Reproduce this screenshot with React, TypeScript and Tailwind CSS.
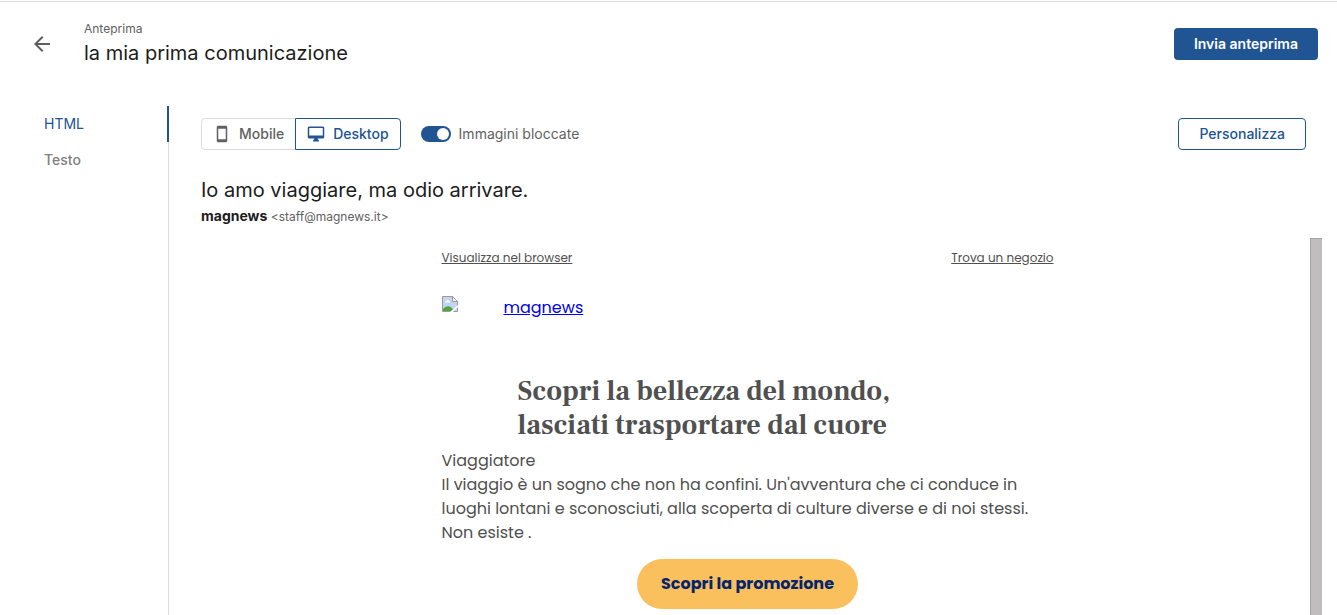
import React, { useState } from "react"
import clsx from "clsx"
import { MdArrowBack, MdOutlineDesktopMac, MdStayCurrentPortrait } from "react-icons/md"

type View = "html" | "text"
type Device = "mobile" | "desktop"

const views: { id: View; label: string }[] = [
  { id: "html", label: "HTML" },
  { id: "text", label: "Testo" },
]

const devices = [
  { id: "mobile" as Device, label: "Mobile", icon: MdStayCurrentPortrait },
  { id: "desktop" as Device, label: "Desktop", icon: MdOutlineDesktopMac },
]

function Header() {
  return (
    <header className="flex items-start border-t border-[#dcdcdc] pr-[19px] pl-[30px] pt-[17px]">
      <button type="button" aria-label="Indietro" className="mt-[13px] text-[#5f5f5f]">
        <MdArrowBack className="h-6 w-6" />
      </button>
      <div className="ml-[30px] flex-1">
        <p className="text-xs leading-5 text-[#616161]">Anteprima</p>
        <h1 className="text-xl leading-7 text-[#1c1c1c]">la mia prima comunicazione</h1>
      </div>
      <button type="button" className="mt-[9px] h-8 rounded bg-[#205493] px-5 text-sm font-semibold text-white">
        Invia anteprima
      </button>
    </header>
  )
}

function SideNav({ view, onChange }: { view: View; onChange: (v: View) => void }) {
  return (
    <nav className="w-[169px] shrink-0 border-r border-[#dcdcdc]">
      {views.map((v) => (
        <button
          key={v.id}
          type="button"
          onClick={() => onChange(v.id)}
          className={clsx(
            "-mr-px flex h-9 w-[169px] items-center border-r-2 pl-11 text-sm",
            view === v.id ? "border-[#205493] text-[#205493]" : "border-transparent font-medium text-[#808080]"
          )}
        >
          {v.label}
        </button>
      ))}
    </nav>
  )
}

interface ToolbarProps {
  device: Device
  onDevice: (d: Device) => void
  blocked: boolean
  onBlocked: (b: boolean) => void
}

function Toolbar({ device, onDevice, blocked, onBlocked }: ToolbarProps) {
  return (
    <div className="flex items-center px-4 pt-3">
      <div className="flex">
        {devices.map(({ id, label, icon: Icon }) => (
          <button
            key={id}
            type="button"
            onClick={() => onDevice(id)}
            className={clsx(
              "flex h-8 items-center gap-2 border px-[11px] text-sm font-medium first:rounded-l last:-ml-px last:rounded-r",
              device === id ? "z-10 border-[#205493] text-[#205493]" : "border-[#dcdcdc] text-[#616161]"
            )}
          >
            <Icon className="h-[18px] w-[18px]" />
            {label}
          </button>
        ))}
      </div>
      <label className="ml-5 flex items-center gap-2 text-sm text-[#616161]">
        <input
          type="checkbox"
          role="switch"
          checked={blocked}
          onChange={(e) => onBlocked(e.target.checked)}
          className="flex h-4 w-[30px] appearance-none items-center rounded-full bg-[#9e9e9e] px-0.5 before:h-3 before:w-3 before:rounded-full before:bg-white checked:justify-end checked:bg-[#205493]"
        />
        Immagini bloccate
      </label>
      <button type="button" className="ml-auto h-8 rounded border border-[#205493] px-5 text-sm font-medium text-[#205493]">
        Personalizza
      </button>
    </div>
  )
}

function BrokenImage() {
  return (
    <svg viewBox="0 0 16 16" className="h-4 w-4 shrink-0" aria-hidden="true">
      <path d="M.5.5h10l5 5v10H.5z" fill="#c3d5f5" stroke="#9a9a9a" />
      <path d="M3 6.5c0-1 .8-1.7 1.7-1.5C5 4 6.5 3.7 7 4.8c1.2 0 1.4 1.7.3 1.7z" fill="#fff" />
      <path d="M1 15v-2c2-3 6-4 9-1l2 3z" fill="#4ea640" />
      <path d="M10.5.5v5h5z" fill="#fff" stroke="#9a9a9a" />
      <path d="M8 16l8-7v2l-5 5z" fill="#fff" />
    </svg>
  )
}

function Newsletter() {
  return (
    <article className="mx-auto w-[612px] max-w-full font-['Poppins','Open_Sans',sans-serif] text-base leading-6 text-[#505050]">
      <div className="flex justify-between pt-[10px] text-xs leading-5">
        <a href="#browser" className="underline">Visualizza nel browser</a>
        <a href="#negozi" className="underline">Trova un negozio</a>
      </div>
      <a href="#magnews" className="mt-7 flex text-[#0000ee]">
        <BrokenImage />
        <span className="ml-[46px] underline">magnews</span>
      </a>
      <h2 className="mt-[54px] px-[76px] font-['Frank_Ruhl_Libre','Source_Serif_4','Liberation_Serif',serif] text-[28px] leading-[34px] font-bold">
        Scopri la bellezza del mondo,
        <br />
        lasciati trasportare dal cuore
      </h2>
      <p className="mt-[7px]">
        Viaggiatore
        <br />
        Il viaggio è un sogno che non ha confini. Un'avventura che ci conduce in
        <br />
        luoghi lontani e sconosciuti, alla scoperta di culture diverse e di noi stessi.
        <br />
        Non esiste .
      </p>
      <div className="mt-[14px] flex justify-center">
        <a href="#promo" className="rounded-full bg-[#fac05e] px-6 py-[13px] font-bold text-[#03256c]">
          Scopri la promozione
        </a>
      </div>
    </article>
  )
}

export default function App() {
  const [view, setView] = useState<View>("html")
  const [device, setDevice] = useState<Device>("desktop")
  const [blocked, setBlocked] = useState(true)

  return (
    <div className="flex h-screen flex-col overflow-hidden bg-white pt-px font-['Inter',sans-serif]">
      <Header />
      <div className="mt-[39px] flex min-h-0 flex-1">
        <SideNav view={view} onChange={setView} />
        <main className="flex min-w-0 flex-1 flex-col pr-[15px] pl-4">
          <Toolbar device={device} onDevice={setDevice} blocked={blocked} onBlocked={setBlocked} />
          <div className="px-4 pt-[26px]">
            <h2 className="text-xl leading-7 text-[#1c1c1c]">Io amo viaggiare, ma odio arrivare.</h2>
            <p className="text-xs leading-6 text-[#616161]">
              <strong className="text-sm leading-6 font-bold text-[#1c1c1c]">magnews</strong> &lt;staff@magnews.it&gt;
            </p>
          </div>
          <div className="mt-[9px] flex min-h-0 flex-1">
            <div className="min-w-0 flex-1 overflow-hidden">
              <Newsletter />
            </div>
            <div className="w-3 border-t border-l border-[#a8a4a5] bg-[#c1bcbd]" />
          </div>
        </main>
      </div>
    </div>
  )
}
